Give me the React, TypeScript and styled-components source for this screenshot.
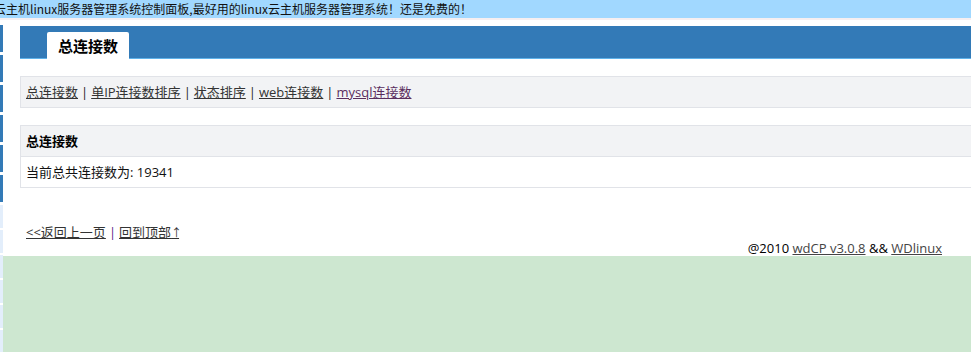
import React from 'react';
import styled, { createGlobalStyle } from 'styled-components';

const GlobalStyle = createGlobalStyle`
  html, body {
    margin: 0;
    padding: 0;
    height: 100%;
    overflow: hidden;
    background: #ffffff;
    font-family: "Open Sans", "Noto Sans CJK SC", sans-serif;
    color: #222;
  }
  #root {
    height: 100%;
  }
`;

const sideItems = [
  'blue', 'blue', 'blue', 'blue', 'blue', 'blue',
  'light', 'light', 'light', 'light', 'light', 'light',
] as const;

const navLinks = ['总连接数', '单IP连接数排序', '状态排序', 'web连接数', 'mysql连接数'];

const App: React.FC = () => {
  return (
    <Page>
      <GlobalStyle />
      <TopBand>
        <Marquee>云主机linux服务器管理系统控制面板,最好用的linux云主机服务器管理系统！还是免费的！</Marquee>
      </TopBand>
      <Body>
        <SideStrip>
          {sideItems.map((kind, i) => (
            <SideItem key={i} $kind={kind} />
          ))}
        </SideStrip>
        <Main>
          <Panel>
            <HeaderBar>
              <Tab>总连接数</Tab>
            </HeaderBar>
            <NavBox>
              {navLinks.map((label, i) => (
                <React.Fragment key={label}>
                  {i > 0 && <Sep>|</Sep>}
                  <NavLink href="#" $visited={label === 'mysql连接数'}>
                    {label}
                  </NavLink>
                </React.Fragment>
              ))}
            </NavBox>
            <InfoTable>
              <HeadRow>总连接数</HeadRow>
              <BodyRow>当前总共连接数为: 19341</BodyRow>
            </InfoTable>
            <BackLinks>
              <NavLink href="#">&lt;&lt;返回上一页</NavLink>
              <Sep $purple>|</Sep>
              <NavLink href="#">
                回到顶部<Arrow>↑</Arrow>
              </NavLink>
            </BackLinks>
            <Footer>
              @2010 <FootLink href="#">wdCP v3.0.8</FootLink> &amp;&amp;{' '}
              <FootLink href="#">WDlinux</FootLink>
            </Footer>
          </Panel>
          <GreenFill />
        </Main>
      </Body>
    </Page>
  );
};

const Page = styled.div`
  display: flex;
  flex-direction: column;
  height: 100vh;
`;

const TopBand = styled.div`
  height: 18px;
  background: #a1d8ff;
  border-bottom: 2px solid #f6eff1;
  overflow: hidden;
  white-space: nowrap;
  font-family: "Noto Sans CJK SC", sans-serif;
  font-size: 12px;
  line-height: 18px;
  color: #111;
`;

const Marquee = styled.span`
  display: inline-block;
  margin-left: -6px;
`;

const Body = styled.div`
  flex: 1;
  display: flex;
  min-height: 0;
`;

const SideStrip = styled.div`
  width: 3px;
  padding-top: 5px;
  display: flex;
  flex-direction: column;
  background: #ffffff;
`;

const SideItem = styled.div<{ $kind: 'blue' | 'light' }>`
  flex: none;
  height: ${(p) => (p.$kind === 'blue' ? '27px' : '23px')};
  margin-bottom: ${(p) => (p.$kind === 'blue' ? '3px' : '2px')};
  background: ${(p) => (p.$kind === 'blue' ? '#337ab7' : '#e3eefb')};
`;

const Main = styled.div`
  flex: 1;
  display: flex;
  flex-direction: column;
  min-width: 0;
`;

const Panel = styled.div`
  background: #ffffff;
  padding: 6px 0 0 17px;
`;

const HeaderBar = styled.div`
  height: 32px;
  background: #337ab7;
  border-bottom: 1px solid #5fb2ea;
  display: flex;
  align-items: flex-end;
  padding-left: 27px;
`;

const Tab = styled.div`
  height: 27px;
  margin-bottom: -1px;
  padding: 0 11px;
  background: #ffffff;
  border-radius: 2px 2px 0 0;
  font-family: "Noto Sans CJK SC", sans-serif;
  font-size: 15px;
  font-weight: bold;
  line-height: 27px;
  color: #000;
`;

const NavBox = styled.div`
  margin: 17px -2px 0 0;
  height: 30px;
  border: 1px solid #e1e3e8;
  background: #f2f3f5;
  padding-left: 5px;
  font-size: 13px;
  line-height: 30px;
`;

const NavLink = styled.a<{ $visited?: boolean }>`
  color: ${(p) => (p.$visited ? '#5a2d5e' : '#333')};
  text-decoration: underline;
`;

const Arrow = styled.span`
  font-size: 11px;
  line-height: 1;
  letter-spacing: -3px;
`;

const Sep = styled.span<{ $purple?: boolean }>`
  margin: 0 3px;
  color: ${(p) => (p.$purple ? '#551a8b' : '#222')};
`;

const InfoTable = styled.div`
  margin: 17px -2px 0 0;
  border: 1px solid #e1e3e8;
  font-size: 13px;
`;

const HeadRow = styled.div`
  height: 30px;
  line-height: 30px;
  padding-left: 5px;
  background: #f2f3f5;
  border-bottom: 1px solid #e1e3e8;
  font-weight: bold;
  color: #000;
`;

const BodyRow = styled.div`
  height: 30px;
  line-height: 30px;
  padding-left: 5px;
  color: #111;
`;

const BackLinks = styled.div`
  height: 16px;
  margin-top: 36px;
  padding-left: 6px;
  font-size: 13px;
  line-height: 16px;
`;

const Footer = styled.div`
  height: 16px;
  text-align: right;
  padding-right: 29px;
  font-size: 13px;
  line-height: 16px;
  color: #000;
`;

const FootLink = styled.a`
  color: #444;
  text-decoration: underline;
`;

const GreenFill = styled.div`
  flex: 1;
  background: #cde7d0;
`;

export default App;
